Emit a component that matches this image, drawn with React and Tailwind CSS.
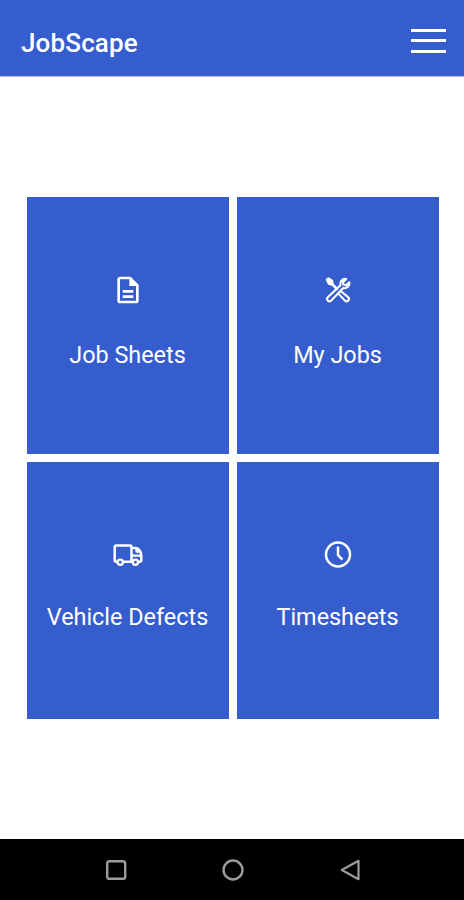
import { MdOutlineDescription } from "react-icons/md";

function ToolsIcon() {
  return (
    <svg width="28" height="28" viewBox="0 0 28 28" fill="none" stroke="currentColor" strokeWidth="2.1" strokeLinejoin="round" strokeLinecap="round">
      <path d="M2.8 3.6 4.6 2.4 8 4.6 8.6 7.2 7.2 8.6 4.8 7.8Z" fill="currentColor" />
      <path d="M7.4 7.4 13 13" strokeWidth="2.6" />
      <path d="M17 15.2 24.4 21.4A2.4 2.4 0 0 1 21.2 24.9L14.4 17.6" />
      <path d="M22.2 3A5 5 0 0 0 16.4 9.2L3.6 21.4A2.4 2.4 0 0 0 6.8 24.9L19.2 12A5 5 0 0 0 25.4 6.2L22 9.2 19.4 8.6 19 6.2Z" />
    </svg>
  );
}

function TruckIcon() {
  return (
    <svg width="30" height="24" viewBox="0 0 30 24" fill="none" stroke="currentColor" strokeWidth="2.5" strokeLinejoin="round">
      <path d="M4.6 18.8H3.2A1.5 1.5 0 0 1 1.7 17.3V4A1.5 1.5 0 0 1 3.2 2.5H17A1.5 1.5 0 0 1 18.5 4V18.8H10.2" />
      <path d="M18.5 5H22.8C25.8 5 28.3 9 28.3 13V17.2A1.5 1.5 0 0 1 26.8 18.8H25.2" />
      <path d="M18.5 12.6H28M23.4 5.5V8.6H27" strokeWidth="2.2" />
      <circle cx="7.3" cy="19.3" r="2.6" strokeWidth="2.3" />
      <circle cx="22.4" cy="19.3" r="2.6" strokeWidth="2.3" />
    </svg>
  );
}

function ClockIcon() {
  return (
    <svg width="28" height="28" viewBox="0 0 28 28" fill="none" stroke="currentColor" strokeWidth="2.5">
      <circle cx="14" cy="13.5" r="12" />
      <path d="M14 5.6V14L18.4 18.6" />
    </svg>
  );
}

const tiles = [
  { label: "Job Sheets", icon: <MdOutlineDescription size={32} />, spacing: "mt-[33px]" },
  { label: "My Jobs", icon: <ToolsIcon />, spacing: "mt-[33px]" },
  { label: "Vehicle Defects", icon: <TruckIcon />, spacing: "mt-[30px]" },
  { label: "Timesheets", icon: <ClockIcon />, spacing: "mt-[30px]" },
];

export default function App() {
  return (
    <div className="flex h-[900px] w-[464px] flex-col bg-white font-[Roboto,sans-serif] text-white">
      <header className="flex h-[77px] shrink-0 items-center justify-between border-b border-[#b9c5ee] bg-[#355dce] pt-[7px] pr-[18px] pl-[21px]">
        <h1 className="pt-[2px] text-[26px] leading-8 font-medium tracking-[0.15px]">JobScape</h1>
        <button aria-label="Menu" className="mb-[2px] flex flex-col gap-[7.5px]">
          <span className="h-[3px] w-[35px] bg-white" />
          <span className="h-[3px] w-[35px] bg-white" />
          <span className="h-[3px] w-[35px] bg-white" />
        </button>
      </header>
      <main className="flex-1 pt-[120px] pr-[25.5px] pl-[26.5px]">
        <div className="grid grid-cols-2 gap-2">
          {tiles.map((tile) => (
            <button key={tile.label} className="flex h-[256.75px] flex-col items-center bg-[#355dce] pt-[77px]">
              <span className="flex h-8 items-center">{tile.icon}</span>
              <span className={`${tile.spacing} text-[23.4px] leading-8 whitespace-nowrap`}>{tile.label}</span>
            </button>
          ))}
        </div>
      </main>
      <nav className="flex h-[61px] shrink-0 items-center justify-center gap-[93px] bg-black pl-px text-[#9c9c9c]">
        <svg width="24" height="24" viewBox="0 0 24 24" fill="none" stroke="currentColor" strokeWidth="2.4">
          <rect x="3.2" y="3.2" width="18" height="17.6" rx="2.4" />
        </svg>
        <svg width="24" height="24" viewBox="0 0 24 24" fill="none" stroke="currentColor" strokeWidth="2.4">
          <circle cx="12" cy="12" r="9.5" />
        </svg>
        <svg width="24" height="24" viewBox="0 0 24 24" fill="none" stroke="currentColor" strokeWidth="2.2" strokeLinejoin="round">
          <path d="M20.5 2.8V21.2L3.8 12Z" />
        </svg>
      </nav>
    </div>
  );
}
